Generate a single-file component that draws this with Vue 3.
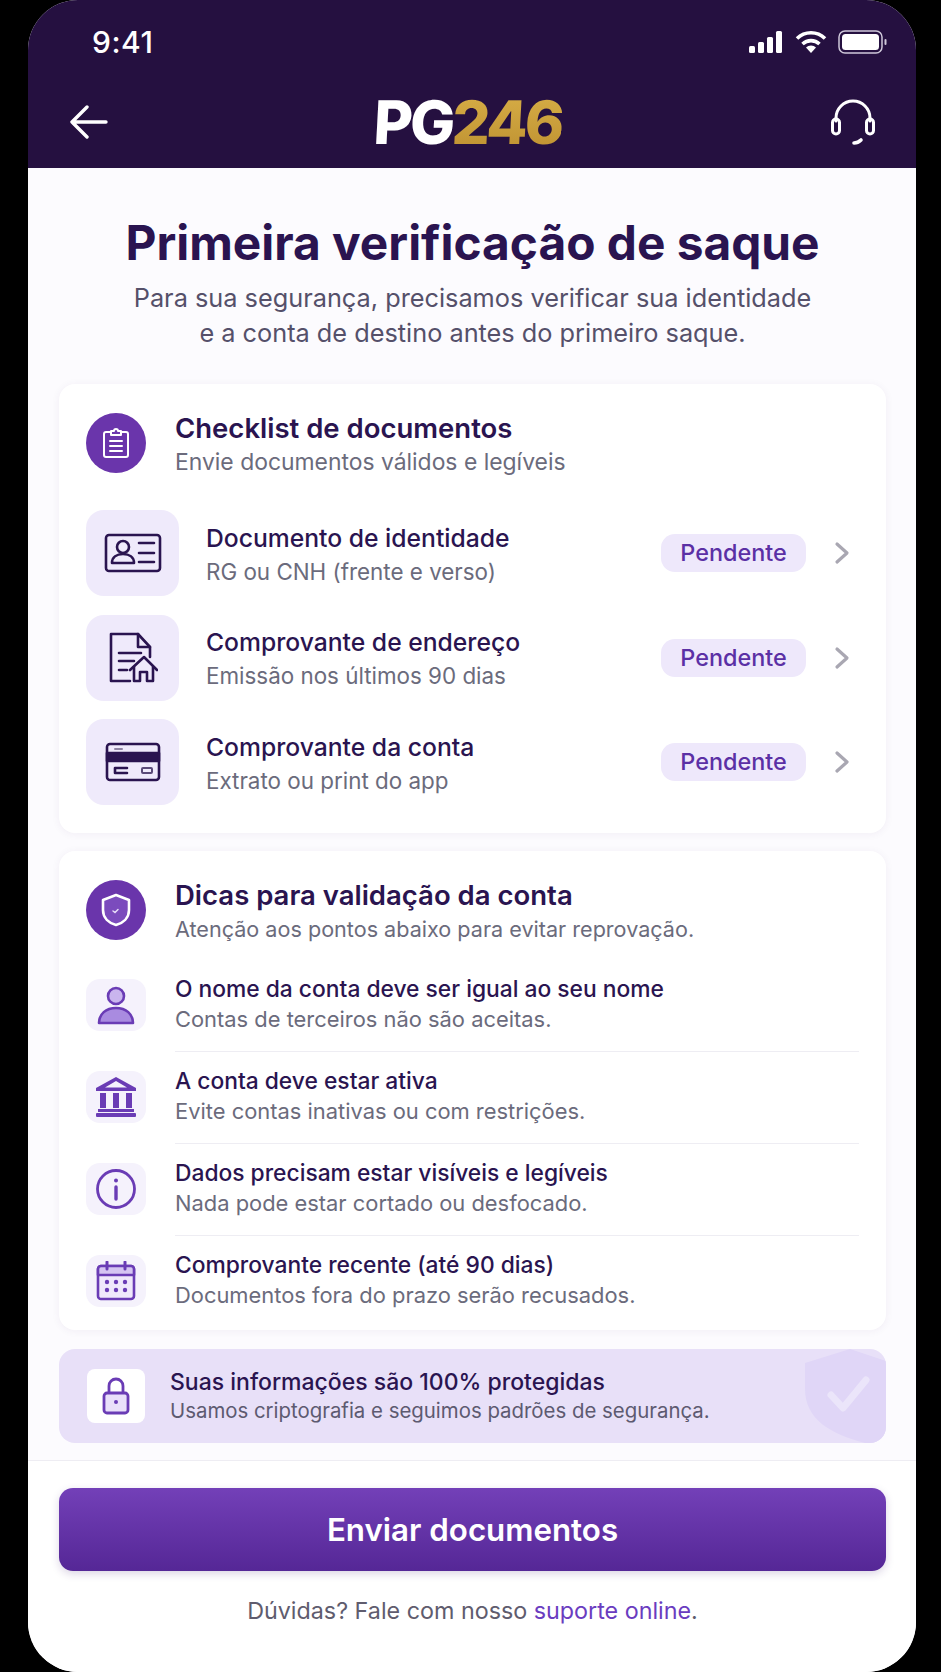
<script setup>
const docs = [
  { icon: 'id', title: 'Documento de identidade', sub: 'RG ou CNH (frente e verso)' },
  { icon: 'home', title: 'Comprovante de endereço', sub: 'Emissão nos últimos 90 dias' },
  { icon: 'card', title: 'Comprovante da conta', sub: 'Extrato ou print do app' }
]

const tips = [
  { icon: 'user', title: 'O nome da conta deve ser igual ao seu nome', sub: 'Contas de terceiros não são aceitas.' },
  { icon: 'bank', title: 'A conta deve estar ativa', sub: 'Evite contas inativas ou com restrições.' },
  { icon: 'info', title: 'Dados precisam estar visíveis e legíveis', sub: 'Nada pode estar cortado ou desfocado.' },
  { icon: 'cal', title: 'Comprovante recente (até 90 dias)', sub: 'Documentos fora do prazo serão recusados.' }
]
</script>

<template>
  <div class="page">
    <div class="phone">
      <header class="top">
        <div class="status">
          <span class="time">9:41</span>
          <div class="status-icons">
            <svg width="36" height="22" viewBox="0 0 36 22" fill="#fff">
              <rect x="1" y="15" width="6" height="7" rx="1.5" />
              <rect x="10" y="11" width="6" height="11" rx="1.5" />
              <rect x="19" y="6" width="6" height="16" rx="1.5" />
              <rect x="28" y="0" width="6" height="22" rx="1.5" />
            </svg>
            <svg width="32" height="24" viewBox="0 0 32 24" fill="none" stroke="#fff" stroke-width="3.6">
              <path d="M2 8.5a20 20 0 0 1 28 0" />
              <path d="M7.5 14a12.5 12.5 0 0 1 17 0" />
              <path d="M16 23l-5-5.5a7 7 0 0 1 10 0z" fill="#fff" stroke="none" />
            </svg>
            <svg width="50" height="24" viewBox="0 0 50 24" fill="none">
              <rect x="1" y="1" width="43" height="22" rx="6" stroke="#cfc8da" stroke-width="1.5" />
              <rect x="4" y="4" width="37" height="16" rx="3.5" fill="#fff" />
              <rect x="46.5" y="9" width="2" height="6" rx="1" fill="#cfc8da" />
            </svg>
          </div>
        </div>
        <div class="nav">
          <svg width="38" height="34" viewBox="0 0 38 34" fill="none" stroke="#fff" stroke-width="3.4" stroke-linecap="round" stroke-linejoin="round">
            <path d="M17 2L2 17l15 15M2 17h34" />
          </svg>
          <div class="logo"><span class="logo-w">PG</span><span class="logo-g">246</span></div>
          <svg width="46" height="46" viewBox="0 0 46 46" fill="none" stroke="#fff" stroke-width="3" stroke-linecap="round">
            <path d="M6 22V19a17 17 0 0 1 34 0v3" />
            <rect x="2.5" y="20" width="7" height="15" rx="3.5" />
            <rect x="36.5" y="20" width="7" height="15" rx="3.5" />
            <path d="M31 41c-2 2-4 3-7 3" stroke-width="3.6" />
          </svg>
        </div>
      </header>

      <main class="content">
        <div class="hero">
          <h1>Primeira verificação de saque</h1>
          <p>Para sua segurança, precisamos verificar sua identidade<br />e a conta de destino antes do primeiro saque.</p>
        </div>

        <section class="card card-docs">
          <div class="card-head">
            <div class="circle">
              <svg width="28" height="32" viewBox="0 0 28 32" fill="none" stroke="#fff" stroke-width="2" stroke-linejoin="round">
                <rect x="2" y="5" width="24" height="25" rx="2" />
                <path d="M9 8V4h3a2 2 0 0 1 4 0h3v4z" fill="#6c38ad" />
                <path d="M8 14h12M8 19h12M8 24h12" stroke-linecap="round" />
              </svg>
            </div>
            <div class="head-text">
              <h2>Checklist de documentos</h2>
              <p class="head-sub">Envie documentos válidos e legíveis</p>
            </div>
          </div>
          <div class="doc-list">
            <div v-for="d in docs" :key="d.icon" class="doc">
              <div class="doc-icon">
                <svg v-if="d.icon === 'id'" width="58" height="40" viewBox="0 0 58 40" fill="none" stroke="#2a1450" stroke-width="2.6" stroke-linecap="round" stroke-linejoin="round">
                  <rect x="2" y="2" width="54" height="36" rx="3" />
                  <circle cx="19" cy="14" r="6" />
                  <path d="M8 30c0-6 5-9 11-9s11 3 11 9z" />
                  <path d="M35 10h15M35 20h15M35 29h15" />
                </svg>
                <svg v-else-if="d.icon === 'home'" width="50" height="54" viewBox="0 0 50 54" fill="none" stroke="#2a1450" stroke-width="2.6" stroke-linecap="round" stroke-linejoin="round">
                  <path d="M22 50H3V3h27l12 13v10" />
                  <path d="M30 3v13h12" />
                  <path d="M11 22h22M11 30h15M11 39h8" />
                  <path d="M22 39l14-13 13 13" />
                  <path d="M26 36v14h6v-9h7v9h6V36" />
                </svg>
                <svg v-else width="56" height="40" viewBox="0 0 56 40" fill="none" stroke="#2a1450" stroke-width="2.6" stroke-linecap="round" stroke-linejoin="round">
                  <rect x="2" y="2" width="52" height="36" rx="3" />
                  <rect x="2" y="11" width="52" height="8" fill="#2a1450" />
                  <path d="M22 26H10v5h12" />
                  <rect x="37" y="26" width="10" height="5" rx="1" stroke-width="2" stroke="#5a4a78" />
                  <path d="M10 7h7" stroke="#8f84a3" stroke-width="2" />
                </svg>
              </div>
              <div class="doc-text">
                <div class="doc-title">{{ d.title }}</div>
                <div class="doc-sub">{{ d.sub }}</div>
              </div>
              <span class="pill">Pendente</span>
              <svg class="chev" width="16" height="24" viewBox="0 0 16 24" fill="none" stroke="#a9a7b2" stroke-width="3.2" stroke-linecap="round" stroke-linejoin="round">
                <path d="M3 3l10 9-10 9" />
              </svg>
            </div>
          </div>
        </section>

        <section class="card card-tips">
          <div class="card-head">
            <div class="circle">
              <svg width="30" height="34" viewBox="0 0 30 34" fill="none">
                <path d="M15 2l13 5v10c0 8-6 13-13 15C8 30 2 25 2 17V7z" fill="#7b4bbd" stroke="#fff" stroke-width="2.6" stroke-linejoin="round" />
                <path d="M12 18l2 1.500 3-3" stroke="#e8def8" stroke-width="1.500" stroke-linecap="round" />
              </svg>
            </div>
            <div class="head-text">
              <h2>Dicas para validação da conta</h2>
              <p class="head-sub head-sub-sm">Atenção aos pontos abaixo para evitar reprovação.</p>
            </div>
          </div>
          <div class="tip-list">
            <div v-for="t in tips" :key="t.icon" class="tip">
              <div class="tip-icon">
                <svg v-if="t.icon === 'user'" width="38" height="40" viewBox="0 0 38 40" fill="none" stroke="#6a3cb5" stroke-width="2.6">
                  <circle cx="19" cy="11" r="8" fill="#c9b5ee" />
                  <path d="M2 38c0-9 7-15 17-15s17 6 17 15z" fill="#a98be0" stroke-linejoin="round" />
                </svg>
                <svg v-else-if="t.icon === 'bank'" width="42" height="42" viewBox="0 0 42 42" fill="#6a3cb5">
                  <path d="M21 1L1 12v3h40v-3zM21 5l11 6.500H10z" fill-rule="evenodd" />
                  <rect x="5" y="17" width="6" height="15" />
                  <rect x="18" y="17" width="6" height="15" />
                  <rect x="31" y="17" width="6" height="15" />
                  <rect x="3" y="33" width="36" height="3" />
                  <rect x="1" y="37" width="40" height="4" rx="1" />
                </svg>
                <svg v-else-if="t.icon === 'info'" width="42" height="42" viewBox="0 0 42 42" fill="none" stroke="#6a3cb5" stroke-width="2.8">
                  <circle cx="21" cy="21" r="18.500" />
                  <path d="M21 19v12" stroke-width="3.4" stroke-linecap="round" />
                  <circle cx="21" cy="12.500" r="2" fill="#6a3cb5" stroke="none" />
                </svg>
                <svg v-else width="40" height="40" viewBox="0 0 40 40" fill="none" stroke="#6a3cb5" stroke-width="2.6" stroke-linejoin="round">
                  <rect x="2" y="5" width="36" height="33" rx="3" fill="#efe8fb" />
                  <path d="M2 14V8a3 3 0 0 1 3-3h30a3 3 0 0 1 3 3v6z" fill="#d5c5f2" />
                  <path d="M11 1v7M29 1v7" stroke-linecap="round" stroke-width="3" />
                  <g fill="#6a3cb5" stroke="none">
                    <circle cx="11" cy="21" r="2.200" />
                    <circle cx="20" cy="21" r="2.200" />
                    <circle cx="29" cy="21" r="2.200" />
                    <circle cx="11" cy="29" r="2.200" />
                    <circle cx="20" cy="29" r="2.200" />
                    <circle cx="29" cy="29" r="2.200" />
                  </g>
                </svg>
              </div>
              <div class="tip-text">
                <div class="tip-title">{{ t.title }}</div>
                <div class="tip-sub">{{ t.sub }}</div>
              </div>
            </div>
          </div>
        </section>

        <section class="secure">
          <div class="lock">
            <svg width="28" height="38" viewBox="0 0 28 38" fill="none" stroke="#6a3cb5" stroke-width="2.800">
              <path d="M7 16V9a7 7 0 0 1 14 0v7" />
              <rect x="2" y="16" width="24" height="20" rx="3" fill="#e9e0fa" />
              <circle cx="14" cy="25" r="2" fill="#6a3cb5" stroke="none" />
            </svg>
          </div>
          <div>
            <div class="secure-title">Suas informações são 100% protegidas</div>
            <div class="secure-sub">Usamos criptografia e seguimos padrões de segurança.</div>
          </div>
          <svg class="watermark" width="81" height="94" viewBox="0 0 81 94" fill="none">
            <path d="M45 0l36 12v82H60C25 85 0 70 0 40V14z" fill="#e0d6f7" />
            <path d="M26 46l12 13 23-28" stroke="#ebe5fa" stroke-width="7" stroke-linecap="round" stroke-linejoin="round" />
          </svg>
        </section>
      </main>

      <footer class="bottom">
        <button class="send">Enviar documentos</button>
        <p class="help">Dúvidas? Fale com nosso <a>suporte online</a>.</p>
      </footer>
    </div>
  </div>
</template>

<style>
html, body {
  margin: 0;
  background: #000;
}
</style>

<style scoped>
.page {
  width: 941px;
  height: 1672px;
  background: #000;
  padding-left: 28px;
  box-sizing: border-box;
  font-family: Inter, "Noto Sans", sans-serif;
}

.phone {
  width: 888px;
  height: 1672px;
  border-radius: 50px;
  overflow: hidden;
  background: #fcfbfe;
  display: flex;
  flex-direction: column;
}

.top {
  height: 168px;
  flex: none;
  background: #251040;
  color: #fff;
  box-sizing: border-box;
  padding: 24px 28px 0 42px;
}

.status {
  display: flex;
  justify-content: space-between;
  align-items: center;
  height: 36px;
  padding: 0 0 0 22px;
}

.time {
  font-size: 30px;
  font-weight: 500;
  letter-spacing: 0.5px;
}

.status-icons {
  display: flex;
  align-items: center;
  gap: 11px;
}

.nav {
  display: flex;
  justify-content: space-between;
  align-items: center;
  margin-top: 32px;
  padding-right: 12px;
}

.logo {
  font-size: 60px;
  font-weight: 800;
  letter-spacing: -3px;
  line-height: 60px;
  transform: skewX(-3deg);
  margin-left: -2px;
}

.logo-w {
  color: #fff;
}

.logo-g {
  background: linear-gradient(180deg, #d9b048, #bd9030);
  -webkit-background-clip: text;
  background-clip: text;
  color: transparent;
}

.content {
  flex: 1;
  padding: 0 30px 0 31px;
  min-height: 0;
}

.hero {
  text-align: center;
  padding-top: 49px;
  height: 167px;
  box-sizing: border-box;
}

.hero h1 {
  margin: 0;
  font-size: 47.8px;
  line-height: 52px;
  font-weight: 700;
  color: #2a1450;
}

.hero p {
  margin: 11px 0 0;
  font-size: 25.3px;
  line-height: 35px;
  color: #55506a;
}

.card {
  background: #fff;
  border-radius: 16px;
  box-shadow: 0 1px 8px rgba(60, 30, 110, 0.06);
  padding: 29px 27px 0;
  box-sizing: border-box;
}

.card-docs {
  height: 449px;
  margin-top: 49px;
}

.card-tips {
  height: 479px;
  margin-top: 18px;
}

.card-head {
  display: flex;
  align-items: flex-start;
  gap: 29px;
  height: 60px;
}

.head-text {
  margin-top: -2px;
}

.circle {
  width: 60px;
  height: 60px;
  flex: none;
  border-radius: 50%;
  background: #6a35ab;
  display: flex;
  align-items: center;
  justify-content: center;
}

h2 {
  margin: 0;
  font-size: 27.5px;
  line-height: 34px;
  font-weight: 600;
  color: #2a1450;
}

.head-sub {
  margin: 0;
  font-size: 22.9px;
  line-height: 34px;
  color: #6b6b7c;
}

.head-sub-sm {
  font-size: 21.6px;
}

.doc-list {
  margin-top: 37px;
  display: flex;
  flex-direction: column;
  gap: 18.5px;
}

.doc {
  display: flex;
  align-items: center;
  height: 86px;
}

.doc-icon {
  width: 93px;
  height: 86px;
  flex: none;
  border-radius: 18px;
  background: #efeafb;
  display: flex;
  align-items: center;
  justify-content: center;
}

.doc-text {
  flex: 1;
  margin: 3px 0 0 27px;
}

.doc-title {
  font-size: 24.7px;
  line-height: 34px;
  font-weight: 500;
  color: #2a1450;
}

.doc-sub {
  font-size: 22.4px;
  line-height: 34px;
  color: #6b6b7c;
}

.pill {
  width: 145px;
  height: 38px;
  border-radius: 14px;
  background: #eee8fb;
  color: #5b30a5;
  font-size: 23.4px;
  font-weight: 500;
  line-height: 38px;
  text-align: center;
}

.chev {
  margin: 0 9px 0 28px;
}

.tip-list {
  margin-top: 19px;
}

.tip {
  display: flex;
  align-items: center;
  height: 92px;
  gap: 29px;
}

.tip + .tip .tip-text {
  border-top: 1px solid #eeedf3;
}

.tip-icon {
  width: 60px;
  height: 52px;
  flex: none;
  border-radius: 14px;
  background: #f5f2fc;
  display: flex;
  align-items: center;
  justify-content: center;
}

.tip-text {
  flex: 1;
  height: 92px;
  box-sizing: border-box;
  padding-top: 14px;
}

.tip:first-child .tip-text {
  padding-top: 15px;
}

.tip-title {
  font-size: 22.8px;
  line-height: 30px;
  font-weight: 500;
  color: #2a1450;
}

.tip-sub {
  font-size: 21.9px;
  line-height: 30px;
  color: #6b6b7c;
}

.secure {
  position: relative;
  overflow: hidden;
  margin-top: 19px;
  height: 94px;
  border-radius: 16px;
  background: #e8e0f8;
  display: flex;
  align-items: center;
  gap: 25px;
  padding-left: 28px;
}

.lock {
  width: 58px;
  height: 54px;
  border-radius: 8px;
  background: #fff;
  display: flex;
  align-items: center;
  justify-content: center;
}

.secure-title {
  font-size: 23px;
  line-height: 30px;
  font-weight: 500;
  color: #2a1450;
}

.secure-sub {
  font-size: 20.4px;
  line-height: 28px;
  color: #5d5a70;
}

.watermark {
  position: absolute;
  right: 0;
  top: 0;
}

.bottom {
  flex: none;
  height: 212px;
  background: #fff;
  border-top: 1px solid #eeedf3;
  box-sizing: border-box;
  padding: 27px 30px 0 31px;
}

.send {
  display: block;
  width: 100%;
  height: 83px;
  border: 0;
  border-radius: 14px;
  background: linear-gradient(180deg, #7340b8, #552796);
  box-shadow: 0 3px 8px rgba(60, 30, 110, 0.18);
  color: #fff;
  font-family: inherit;
  font-size: 31.3px;
  font-weight: 600;
}

.help {
  margin: 24px 0 0;
  text-align: center;
  font-size: 23.3px;
  line-height: 32px;
  color: #5f5c6e;
}

.help a {
  color: #6a3cc0;
}
</style>
